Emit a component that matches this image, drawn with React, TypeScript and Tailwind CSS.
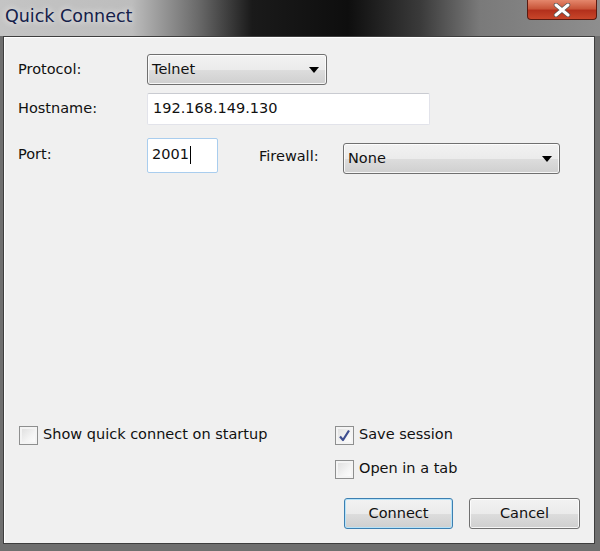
import React from "react";

function Arrow() {
  return (
    <svg width="10" height="6" viewBox="0 0 10 6" className="shrink-0">
      <path d="M0 0h10L5 6z" fill="#000" />
    </svg>
  );
}

function Dropdown({ value, className }: { value: string; className: string }) {
  return (
    <div
      className={`${className} flex items-center justify-between rounded-[3px] border border-[#707070] bg-[linear-gradient(to_bottom,#f2f2f2_0%,#ebebeb_50%,#dddddd_51%,#cfcfcf_100%)] pl-[4px] pr-[7px] shadow-[inset_0_0_0_1px_rgba(255,255,255,0.8)]`}
    >
      <span>{value}</span>
      <Arrow />
    </div>
  );
}

function Checkbox({ checked, label }: { checked?: boolean; label: string }) {
  return (
    <div className="flex items-center gap-[5px] h-[20px]">
      <div className="w-[19px] h-[19px] border border-[#8e8f8f] bg-[linear-gradient(135deg,#dcdcdc_0%,#f4f4f4_60%,#ffffff_100%)] flex items-center justify-center shadow-[inset_0_0_0_2px_#f4f4f4]">
        {checked && (
          <svg width="13" height="13" viewBox="0 0 13 13">
            <path
              d="M2 7.5L5 11L11 1.5"
              fill="none"
              stroke="#3d4d8f"
              strokeWidth="2.2"
              strokeLinejoin="round"
            />
          </svg>
        )}
      </div>
      <span>{label}</span>
    </div>
  );
}

function Button({ label, primary }: { label: string; primary?: boolean }) {
  return (
    <div
      className={`h-[31px] flex items-center justify-center rounded-[3px] border bg-[linear-gradient(to_bottom,#f2f2f2_0%,#ebebeb_50%,#dddddd_51%,#cfcfcf_100%)] ${
        primary
          ? "w-[109px] border-[#3c7fb1] shadow-[inset_0_0_0_1px_#b6e3f9]"
          : "w-[111px] border-[#707070] shadow-[inset_0_0_0_1px_rgba(255,255,255,0.8)]"
      }`}
    >
      {label}
    </div>
  );
}

export default function App() {
  return (
    <div className="w-[600px] h-[551px] flex flex-col bg-[#6f6f6f] pl-[3px] pr-[5px] pb-[7px] font-['DejaVu_Sans',sans-serif] text-[14.5px] text-[#111]">
      {/* Title bar */}
      <div className="-ml-[3px] -mr-[5px] h-[36px] flex justify-between items-start bg-[linear-gradient(to_right,#c4c4c4_0%,#bdbdbd_22%,#6a6a6a_33%,#1a1a1a_42%,#0e0e0e_58%,#3a3a3a_70%,#7a7a7a_80%,#8e8e8e_100%)]">
        <div className="pl-[5px] pt-[3px] text-[17.5px] text-[#14204a] [text-shadow:0_0_6px_rgba(255,255,255,0.95)]">
          Quick Connect
        </div>
        <div className="mr-[3px] w-[70px] h-[20px] rounded-b-[4px] border border-t-0 border-[#5a1a10] bg-[linear-gradient(to_bottom,#e4876c_0%,#c9563a_45%,#b3301c_55%,#c8462a_100%)] flex items-center justify-center">
          <svg width="18" height="14" viewBox="0 0 18 14">
            <path
              d="M3 2L15 12M15 2L3 12"
              stroke="#555"
              strokeWidth="4.5"
              strokeLinecap="round"
            />
            <path
              d="M3 2L15 12M15 2L3 12"
              stroke="#fff"
              strokeWidth="3"
              strokeLinecap="round"
            />
          </svg>
        </div>
      </div>

      {/* Client area */}
      <div className="flex-1 flex flex-col border border-[#3e3e3e] bg-[#f0f0f0] shadow-[inset_1px_1px_0_#ffffff]">
        <div className="flex flex-col pt-[17px] pl-[14px]">
          <div className="flex items-center">
            <span className="w-[129px]">Protocol:</span>
            <Dropdown value="Telnet" className="w-[180px] h-[31px]" />
          </div>
          <div className="flex items-center mt-[8px]">
            <span className="w-[129px]">Hostname:</span>
            <div className="w-[283px] h-[32px] flex items-center pl-[5px] bg-white border border-[#e2e3ea] border-t-[#c9cbd1] rounded-[2px]">
              192.168.149.130
            </div>
          </div>
          <div className="flex items-center mt-[11px]">
            <span className="w-[129px]">Port:</span>
            <div className="w-[71px] h-[35px] flex items-center pl-[4px] bg-white border border-[#a9cdee] rounded-[2px]">
              2001
              <span className="inline-block w-px h-[18px] bg-black ml-[1px]" />
            </div>
            <span className="ml-[41px] w-[84px] pt-[4px]">Firewall:</span>
            <Dropdown value="None" className="w-[217px] h-[31px] mt-[7px]" />
          </div>
        </div>

        <div className="flex-1" />

        <div className="flex justify-between pl-[15px] pr-[14px] pb-[14px]">
          <div>
            <Checkbox label="Show quick connect on startup" />
          </div>
          <div className="w-[245px] flex flex-col">
            <Checkbox checked label="Save session" />
            <div className="mt-[14px]">
              <Checkbox label="Open in a tab" />
            </div>
            <div className="mt-[19px] pl-[9px] flex gap-[16px]">
              <Button label="Connect" primary />
              <Button label="Cancel" />
            </div>
          </div>
        </div>
      </div>
    </div>
  );
}
